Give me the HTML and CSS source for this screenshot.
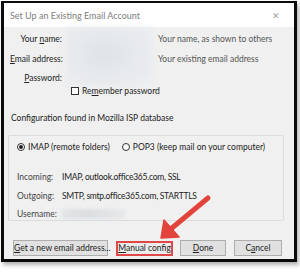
FILE: index.html
```html
<!DOCTYPE html>
<html lang="en">
<head>
  <meta charset="UTF-8">
  <title>Set Up an Existing Email Account</title>
  <link rel="stylesheet" href="styles.css">
</head>
<body>
  <div class="window">
    <div class="titlebar">
      <span class="title">Set Up an Existing Email Account</span>
      <span class="close">&#x2715;</span>
    </div>

    <div class="content">
      <div class="fields">
        <span class="label">Your <u>n</u>ame:</span>
        <div class="blur"></div>
        <span class="hint">Your name, as shown to others</span>
        <span class="label"><u>E</u>mail address:</span>
        <span class="hint">Your existing email address</span>
        <span class="label"><u>P</u>assword:</span>
        <span class="hint"></span>
      </div>

      <label class="remember">
        <span class="checkbox"></span>
        <span>Re<u>m</u>ember password</span>
      </label>

      <p class="found">Configuration found in Mozilla ISP database</p>

      <div class="group">
        <div class="protocols">
          <span class="radio checked"></span>
          <span>IMAP (remote folders)</span>
          <span class="radio"></span>
          <span>POP3 (keep mail on your computer)</span>
        </div>
        <div class="servers">
          <div class="server">
            <span class="key">Incoming:</span>
            <span class="value">IMAP, outlook.office365.com, SSL</span>
          </div>
          <div class="server">
            <span class="key">Outgoing:</span>
            <span class="value">SMTP, smtp.office365.com, STARTTLS</span>
          </div>
          <div class="server">
            <span class="key">Username:</span>
            <span class="blur-small"></span>
          </div>
        </div>
      </div>

      <div class="buttons">
        <button class="btn wide"><u>G</u>et a new email address...</button>
        <button class="btn manual"><u>M</u>anual config</button>
        <button class="btn done"><u>D</u>one</button>
        <button class="btn cancel">C<u>a</u>ncel</button>
      </div>
    </div>

    <!-- annotation arrow -->
    <svg class="arrow" width="60" height="52" viewBox="0 0 60 52">
      <line x1="54" y1="7" x2="18" y2="37" stroke="#e2433b" stroke-width="5" stroke-linecap="round"/>
      <polygon points="7,47 10,29 25,46" fill="#e2433b" stroke="#e2433b" stroke-width="1.5" stroke-linejoin="round"/>
    </svg>
  </div>
</body>
</html>
```

FILE: styles.css
```css
* {
  box-sizing: border-box;
}

body {
  margin: 0;
  width: 300px;
  height: 274px;
  background: #fff;
  font-family: Lato, "Liberation Sans", sans-serif;
  font-size: 8.5px;
  color: #222;
  padding: 1px 3px 0 1px;
  white-space: nowrap;
}

u {
  text-decoration-thickness: 1px;
  text-underline-offset: 1px;
}

.window {
  position: relative;
  height: 261px;
  border: 3px solid #0b0b0b;
  border-top-width: 2px;
  box-shadow: 2px 3px 4px rgba(0, 0, 0, 0.3);
  display: flex;
  flex-direction: column;
}

.titlebar {
  height: 24px;
  background: #fff;
  display: flex;
  align-items: center;
  justify-content: space-between;
  padding: 0 14px 0 6px;
  color: #7d7d7d;
  font-size: 9px;
}

.close {
  font-size: 9px;
  color: #a0a0a0;
}

.content {
  flex: 1;
  background: #f0f0f0;
  padding: 0 10px 0 6px;
}

.fields {
  display: grid;
  grid-template-columns: 52px 88px 1fr;
  grid-template-rows: 20px 20px 17px;
  column-gap: 4px;
  align-items: center;
  padding-top: 2px;
}

.label {
  grid-column: 1;
  text-align: right;
}

.hint {
  grid-column: 3;
  color: #555;
}

.blur {
  grid-column: 2;
  grid-row: 1 / 4;
  align-self: stretch;
  margin: -2px 0 -1px;
  background: radial-gradient(ellipse at 45% 45%, #dfe3e8 0%, #e6e9ed 45%, #eef0f2 100%);
  filter: blur(2px);
}

.remember {
  position: relative;
  display: flex;
  align-items: center;
  gap: 3px;
  margin: -2px 0 0 61px;
  height: 14px;
}

.checkbox {
  width: 8px;
  height: 8px;
  border: 1px solid #333;
  background: #fff;
}

.found {
  margin: 15px 0 0 1px;
}

.group {
  margin: 12px 0 0 -2px;
  border: 1px solid #dcdcdc;
  border-radius: 2px;
  height: 86px;
  padding: 5px 0 0 8px;
}

.protocols {
  display: flex;
  align-items: center;
  gap: 3px;
  height: 12px;
}

.radio {
  width: 8px;
  height: 8px;
  border: 1px solid #333;
  border-radius: 50%;
  background: #fff;
  display: flex;
  align-items: center;
  justify-content: center;
}

.radio + span {
  margin-right: 9px;
}

.radio.checked::after {
  content: "";
  width: 4px;
  height: 4px;
  border-radius: 50%;
  background: #222;
}

.servers {
  margin-top: 15px;
}

.server {
  display: grid;
  grid-template-columns: 45px 1fr;
  align-items: center;
  height: 18.5px;
}

.key {
  color: #444;
}

.value {
  letter-spacing: -0.25px;
}

.blur-small {
  display: block;
  width: 63px;
  height: 10px;
  background: linear-gradient(90deg, #e2e4e7, #dcdfe2 40%, #e6e8ea);
  filter: blur(1.5px);
}

.buttons {
  display: flex;
  align-items: center;
  margin-top: 19px;
  gap: 8px;
}

.btn {
  font: inherit;
  color: #222;
  height: 16px;
  padding: 0;
  border: 1px solid #adadad;
  background: #e1e1e1;
}

.btn.wide {
  width: 95px;
  margin-left: 3px;
}

.btn.manual {
  width: 57px;
  height: 15px;
  border: 2px solid #e04848;
  background: #ebebeb;
  margin-right: -1px;
}

.btn.done {
  width: 46px;
}

.btn.cancel {
  width: 48px;
}

.arrow {
  position: absolute;
  left: 150px;
  top: 188px;
}
```
